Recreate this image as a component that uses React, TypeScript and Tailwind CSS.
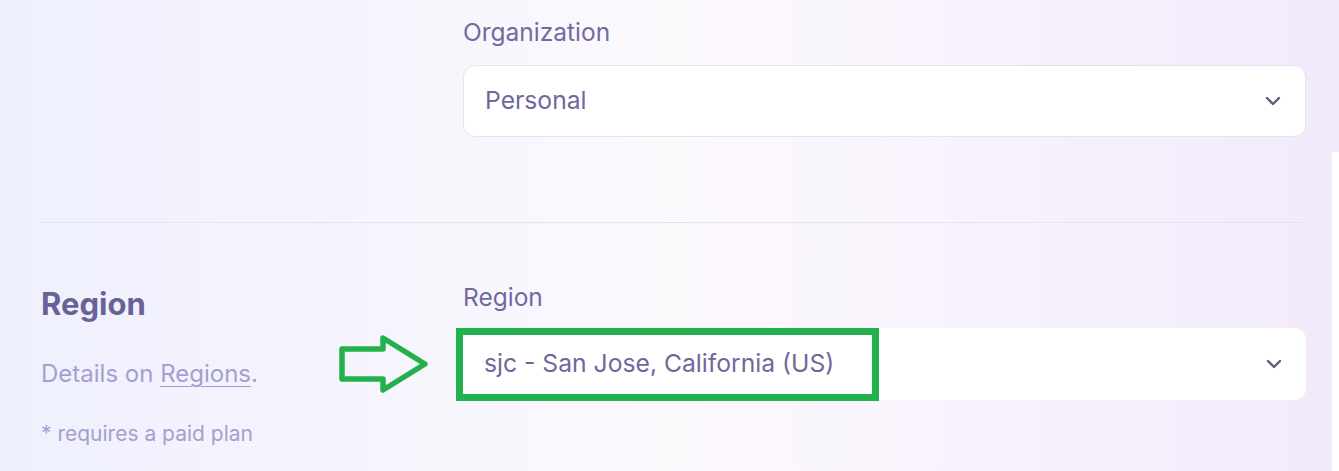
import { ChevronDown } from "lucide-react";

const font = { fontFamily: "Inter, 'Noto Sans', sans-serif" };

const Select = ({ value, bordered }: { value: string; bordered?: boolean }) => (
  <div
    className={`flex h-[72px] w-full items-center justify-between rounded-[12px] bg-white pl-[21px] pr-[20px] ${
      bordered ? "border border-[#e3e4f3]" : ""
    }`}
  >
    <span className="text-[24.7px] text-[#6f689d]">{value}</span>
    <ChevronDown className="h-6 w-6 text-[#5d5b7e]" strokeWidth={2.4} />
  </div>
);

export default function App() {
  return (
    <div
      style={font}
      className="relative flex h-[471px] w-[1339px] overflow-hidden bg-gradient-to-r from-[#eef0fd] via-[#fcf9fd] to-[#f2eafb]"
    >
      <div className="flex-1 pl-[41px] pr-[26px]">
        <div className="flex pt-4">
          <div className="w-[422px] shrink-0" />
          <div className="flex-1">
            <div className="h-8 text-[24.5px] leading-8 text-[#716a9f]">Organization</div>
            <div className="mt-[17px]">
              <Select value="Personal" bordered />
            </div>
          </div>
        </div>

        <div className="mt-[85px] h-px bg-[#e4e3f5]" />

        <div className="flex pt-[58px]">
          <div className="w-[422px] shrink-0 pt-[5px]">
            <h2 className="text-[31px] font-bold leading-9 text-[#6a6196]">Region</h2>
            <p className="mt-[36px] text-[24px] leading-8 text-[#a59fcf]">
              Details on{" "}
              <span className="underline decoration-1 underline-offset-4">Regions</span>.
            </p>
            <p className="mt-[32px] text-[21px] leading-6 text-[#a59fcf]">* requires a paid plan</p>
          </div>
          <div className="relative flex-1">
            <div className="h-8 text-[24.5px] leading-8 text-[#716a9f]">Region</div>
            <div className="mt-[15px]">
              <Select value="sjc - San Jose, California (US)" />
            </div>
            <div className="absolute left-[-7px] top-[47px] h-[73px] w-[423px] border-[7px] border-[#22b14c]" />
            <svg
              className="absolute left-[-125px] top-[54px]"
              width="92"
              height="58"
              viewBox="0 0 92 58"
            >
              <path
                d="M4 14 H45 V3 L87 29 L45 55 V44 H4 Z"
                fill="none"
                stroke="#22b14c"
                strokeWidth="5.5"
                strokeLinejoin="round"
              />
            </svg>
          </div>
        </div>
      </div>
      <div className="flex w-[7px] flex-col">
        <div className="h-[152px]" />
        <div className="flex-1 bg-white" />
      </div>
    </div>
  );
}
